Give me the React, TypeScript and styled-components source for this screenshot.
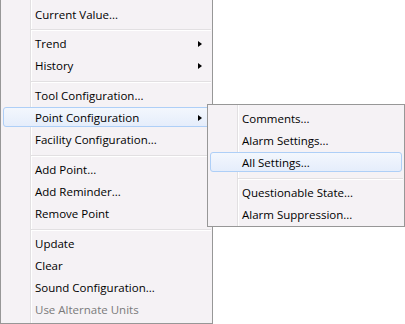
import React from 'react';
import styled, { createGlobalStyle } from 'styled-components';

const Global = createGlobalStyle`
  html, body { margin: 0; padding: 0; background: #ffffff; }
  body {
    width: 405px;
    height: 324px;
    overflow: hidden;
    font-family: "Open Sans", "Noto Sans", sans-serif;
  }
`;

const Stage = styled.div`
  position: relative;
  width: 405px;
  height: 324px;
`;

const Menu = styled.div<{ $width: number; $noTop?: boolean; $pt: number; $pb: number }>`
  box-sizing: border-box;
  width: ${p => p.$width}px;
  border: 1px solid #979797;
  ${p => (p.$noTop ? 'border-top: none;' : '')}
  padding: ${p => p.$pt}px 0 ${p => p.$pb}px;
  background:
    linear-gradient(
      to right,
      transparent 29px,
      #e2e0e2 29px,
      #e2e0e2 30px,
      #ffffff 30px,
      #ffffff 31px,
      transparent 31px
    ),
    #f5f2f5;
  display: flex;
  flex-direction: column;
`;

const SubMenu = styled(Menu)`
  position: absolute;
  left: 207px;
  top: 104px;
`;

const Item = styled.div`
  height: 22px;
  padding: 1px 2px;
  box-sizing: border-box;
`;

const ItemBox = styled.div<{ $active?: boolean; $disabled?: boolean }>`
  height: 20px;
  box-sizing: border-box;
  border: 1px solid ${p => (p.$active ? '#aecff7' : 'transparent')};
  border-radius: 3px;
  background: ${p => (p.$active ? 'linear-gradient(#f3f7fd, #e5edfb)' : 'transparent')};
  display: flex;
  align-items: center;
  padding-left: 31px;
  padding-right: 7px;
  padding-top: 1px;
  color: ${p => (p.$disabled ? '#7a7a7a' : '#000000')};
  font-size: 11.5px;
  line-height: 17px;
  white-space: nowrap;
`;

const Arrow = styled.span`
  margin-left: auto;
  width: 0;
  height: 0;
  border-left: 4px solid #000000;
  border-top: 3.5px solid transparent;
  border-bottom: 3.5px solid transparent;
`;

const Separator = styled.div<{ $h: number; $left: number }>`
  height: ${p => p.$h}px;
  box-sizing: border-box;
  padding-top: ${p => p.$h - 3}px;
  margin-left: ${p => p.$left}px;
  margin-right: 1px;
  display: flex;
  flex-direction: column;
  &::before {
    content: '';
    height: 1px;
    background: #e2e0e2;
  }
  &::after {
    content: '';
    height: 1px;
    background: #ffffff;
  }
`;

type Entry =
  | { kind: 'item'; label: string; sub?: boolean; active?: boolean; disabled?: boolean }
  | { kind: 'sep'; h: number };

const mainEntries: Entry[] = [
  { kind: 'item', label: 'Current Value...' },
  { kind: 'sep', h: 7 },
  { kind: 'item', label: 'Trend', sub: true },
  { kind: 'item', label: 'History', sub: true },
  { kind: 'sep', h: 8 },
  { kind: 'item', label: 'Tool Configuration...' },
  { kind: 'item', label: 'Point Configuration', sub: true, active: true },
  { kind: 'item', label: 'Facility Configuration...' },
  { kind: 'sep', h: 8 },
  { kind: 'item', label: 'Add Point...' },
  { kind: 'item', label: 'Add Reminder...' },
  { kind: 'item', label: 'Remove Point' },
  { kind: 'sep', h: 8 },
  { kind: 'item', label: 'Update' },
  { kind: 'item', label: 'Clear' },
  { kind: 'item', label: 'Sound Configuration...' },
  { kind: 'item', label: 'Use Alternate Units', disabled: true },
];

const subEntries: Entry[] = [
  { kind: 'item', label: 'Comments...' },
  { kind: 'item', label: 'Alarm Settings...' },
  { kind: 'item', label: 'All Settings...', active: true },
  { kind: 'sep', h: 8 },
  { kind: 'item', label: 'Questionable State...' },
  { kind: 'item', label: 'Alarm Suppression...' },
];

const renderEntries = (entries: Entry[]) =>
  entries.map((e, i) =>
    e.kind === 'sep' ? (
      <Separator key={i} $h={e.h} $left={30} />
    ) : (
      <Item key={i}>
        <ItemBox $active={e.active} $disabled={e.disabled}>
          {e.label}
          {e.sub && <Arrow />}
        </ItemBox>
      </Item>
    )
  );

export default function App() {
  return (
    <>
      <Global />
      <Stage>
        <Menu $width={213} $noTop $pt={3} $pb={3}>
          {renderEntries(mainEntries)}
        </Menu>
        <SubMenu $width={198} $pt={2} $pb={1}>
          {renderEntries(subEntries)}
        </SubMenu>
      </Stage>
    </>
  );
}
